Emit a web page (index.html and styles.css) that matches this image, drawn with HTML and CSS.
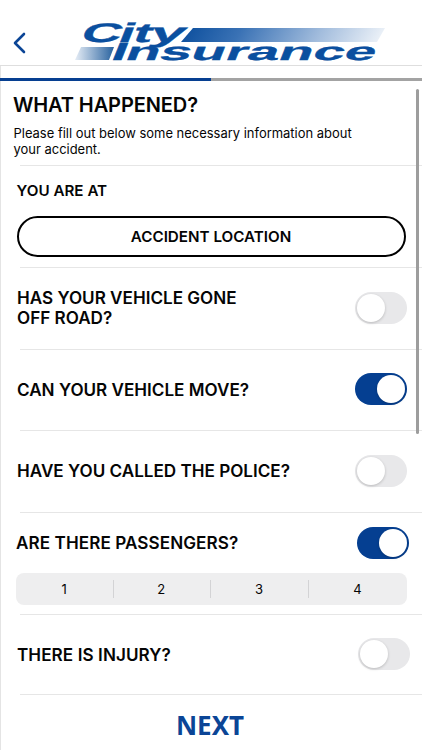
FILE: index.html
```html
<!DOCTYPE html>
<html lang="en">
<head>
    <meta charset="UTF-8">
    <meta name="viewport" content="width=device-width, initial-scale=1.0">
    <title>City Insurance</title>
    <link rel="stylesheet" href="styles.css">
</head>
<body>
    <header class="header">
        <button type="button" class="back-btn" aria-label="Back">
            <svg width="14" height="24" viewBox="0 0 14 24"><path d="M12 3 L3 12 L12 21"/></svg>
        </button>
        <svg class="logo" width="320" height="65" viewBox="70 0 320 65">
            <defs>
                <linearGradient id="barRight" x1="0" y1="0" x2="1" y2="0.04">
                    <stop offset="0" stop-color="#0a4d9c"/>
                    <stop offset="0.3" stop-color="#3a72b5"/>
                    <stop offset="0.7" stop-color="#a3bddd"/>
                    <stop offset="1" stop-color="#eaf0f7"/>
                </linearGradient>
                <linearGradient id="barLeft" x1="0" y1="0" x2="1" y2="0">
                    <stop offset="0" stop-color="#e6edf6"/>
                    <stop offset="1" stop-color="#28629f"/>
                </linearGradient>
            </defs>
            <polygon points="193,28 385,28 377,42 181,42" fill="url(#barRight)"/>
            <polygon points="81,47 114,47 109,60 75,60" fill="url(#barLeft)"/>
            <g class="logo-text">
                <g class="logo-city">
                    <text transform="matrix(2.05 0 -0.4 1 79 42)">C</text>
                    <text transform="matrix(2.05 0 -0.4 1 116.5 42)">i</text>
                    <text transform="matrix(2.05 0 -0.4 1 131 42)">t</text>
                    <text transform="matrix(2.3 0 -0.4 1 148 42)">y</text>
                </g>
                <text transform="matrix(2.2 0 -0.4 1 109.5 60)">I</text>
                <text transform="matrix(2.25 0 -0.4 1 123.5 60)">nsurance</text>
            </g>
        </svg>
    </header>

    <div class="progress"><div class="progress-bar"></div></div>

    <main class="content">
        <div class="scrollbar"></div>
        <div class="intro">
            <h1>WHAT HAPPENED?</h1>
            <p>Please fill out below some necessary information about<br>your accident.</p>
        </div>

        <section class="location">
            <h2>YOU ARE AT</h2>
            <button type="button" class="location-btn">ACCIDENT LOCATION</button>
        </section>

        <section class="row">
            <h3>HAS YOUR VEHICLE GONE<br>OFF ROAD?</h3>
            <div class="switch"></div>
        </section>
        <section class="row">
            <h3>CAN YOUR VEHICLE MOVE?</h3>
            <div class="switch on"></div>
        </section>
        <section class="row">
            <h3>HAVE YOU CALLED THE POLICE?</h3>
            <div class="switch"></div>
        </section>

        <section class="passengers">
            <div class="passengers-top">
                <h3>ARE THERE PASSENGERS?</h3>
                <div class="switch on"></div>
            </div>
            <div class="segments">
                <span>1</span>
                <span>2</span>
                <span>3</span>
                <span>4</span>
            </div>
        </section>

        <section class="row injury">
            <h3>THERE IS INJURY?</h3>
            <div class="switch"></div>
        </section>
    </main>

    <button type="button" class="next-btn">NEXT</button>
</body>
</html>
```
FILE: styles.css
```css
* {
    box-sizing: border-box;
}
body {
    margin: 0;
    width: 422px;
    height: 750px;
    overflow: hidden;
    background: #fff;
    color: #050505;
    font-family: Inter, sans-serif;
    display: flex;
    flex-direction: column;
    box-shadow: inset 1px 0 #e4e4e4;
}
h1, h2, h3, p {
    margin: 0;
}
button {
    background: none;
    border: none;
    padding: 0;
    font-family: inherit;
    color: inherit;
}
.header {
    height: 66px;
    padding-left: 12px;
    display: flex;
    align-items: flex-start;
    background: #fff;
    border-bottom: 1px solid #dedede;
}
.back-btn {
    width: 14px;
    height: 24px;
    margin: 31px 44px 0 0;
}
.back-btn svg {
    display: block;
    fill: none;
    stroke: #0b4596;
    stroke-width: 2.6;
    stroke-linecap: round;
    stroke-linejoin: round;
}
.logo {
    flex: none;
}
.logo-text {
    font-family: "Liberation Sans", Arial, sans-serif;
    font-weight: bold;
    font-size: 25px;
    fill: #0a4f9f;
    stroke: #0a4f9f;
    stroke-width: 0.3;
}
.logo-city {
    font-size: 27px;
}
.progress {
    height: 3px;
    margin-top: 12px;
    background: #a3a3a3;
}
.progress-bar {
    width: 50%;
    height: 3px;
    background: #063f91;
}
.content {
    position: relative;
    height: 615px;
}
.scrollbar {
    position: absolute;
    top: 8px;
    right: 3px;
    width: 3px;
    height: 345px;
    border-radius: 2px;
    background: #9d9d9d;
}
.intro {
    height: 84px;
    padding: 12px 13px 0;
}
.intro h1 {
    font-size: 20px;
    line-height: 24px;
    font-weight: 600;
    letter-spacing: -0.1px;
}
.intro p {
    margin-top: 8px;
    padding-left: 0.5px;
    font-size: 12.96px;
    line-height: 16px;
}
.location, .row, .passengers {
    padding: 0 15px 0 17px;
    background: linear-gradient(#e6e6e6, #e6e6e6) 20px 0 / 100% 1px no-repeat;
}
.location {
    height: 102px;
    padding-top: 17px;
    padding-left: 16.5px;
}
.location h2 {
    font-size: 15.2px;
    line-height: 18px;
    font-weight: 600;
}
.location-btn {
    display: block;
    width: 389px;
    height: 41px;
    margin-top: 16px;
    border: 2px solid #000;
    border-radius: 21px;
    font-size: 15.2px;
    font-weight: 600;
}
.row {
    height: 81.5px;
    display: flex;
    align-items: center;
    justify-content: space-between;
}
h3 {
    padding-top: 1px;
    font-size: 17.1px;
    line-height: 20px;
    font-weight: 600;
}
.switch {
    flex: none;
    width: 52px;
    height: 32px;
    padding: 2px;
    border-radius: 16px;
    background: #e8e8ea;
}
.switch::before {
    content: "";
    display: block;
    width: 28px;
    height: 28px;
    border-radius: 50%;
    background: #fff;
    box-shadow: 0 1px 3px rgba(0, 0, 0, 0.2);
}
.switch.on {
    background: #053f91;
}
.switch.on::before {
    margin-left: 20px;
}
.passengers {
    height: 102px;
    padding: 15px 13.5px 0 16px;
}
.passengers h3 {
    letter-spacing: 0.08px;
}
.passengers-top {
    display: flex;
    align-items: center;
    justify-content: space-between;
}
.segments {
    display: grid;
    grid-template-columns: 96.5px 97.5px 98px 99px;
    width: 391px;
    height: 32px;
    margin-top: 14px;
    border-radius: 8px;
    background: #eeeeef;
}
.segments span {
    display: flex;
    align-items: center;
    justify-content: center;
    font-size: 13px;
    background: linear-gradient(#d3d3d5, #d3d3d5) 0 50% / 1px 18px no-repeat;
}
.segments span:first-child {
    background: none;
}
.injury {
    padding-right: 12.5px;
    background: linear-gradient(#e6e6e6, #e6e6e6) 20px 0 / 100% 1px no-repeat,
        linear-gradient(#e6e6e6, #e6e6e6) 20px 100% / 100% 1px no-repeat;
}
.injury h3 {
    letter-spacing: 0.08px;
}
.next-btn {
    height: 54px;
    padding: 4px 2px 0 0;
    color: #0b4596;
    font-family: "Noto Sans", sans-serif;
    font-size: 26px;
    font-weight: 700;
}
```
